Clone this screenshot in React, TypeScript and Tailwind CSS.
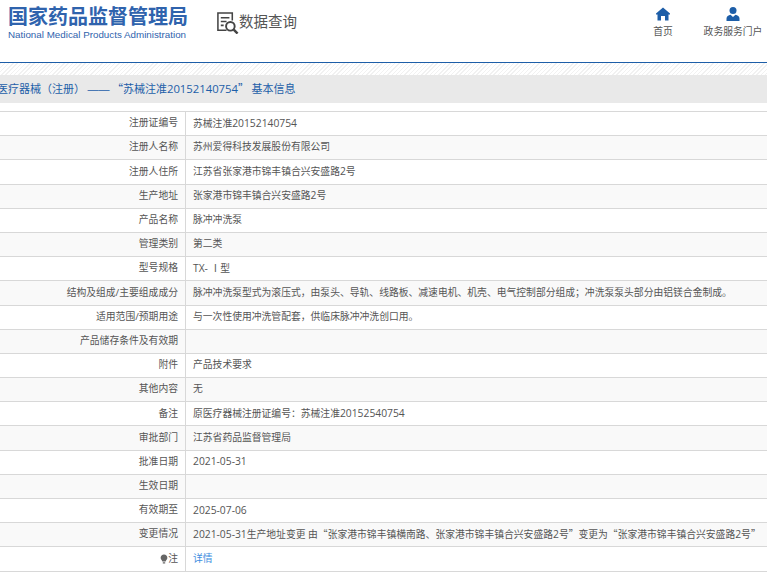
const rows = [
  ["注册证编号", "苏械注准20152140754"],
  ["注册人名称", "苏州爱得科技发展股份有限公司"],
  ["注册人住所", "江苏省张家港市锦丰镇合兴安盛路2号"],
  ["生产地址", "张家港市锦丰镇合兴安盛路2号"],
  ["产品名称", "脉冲冲洗泵"],
  ["管理类别", "第二类"],
  ["型号规格", "TX- Ⅰ型"],
  ["结构及组成/主要组成成分", "脉冲冲洗泵型式为滚压式，由泵头、导轨、线路板、减速电机、机壳、电气控制部分组成；冲洗泵泵头部分由铝镁合金制成。"],
  ["适用范围/预期用途", "与一次性使用冲洗管配套，供临床脉冲冲洗创口用。"],
  ["产品储存条件及有效期", ""],
  ["附件", "产品技术要求"],
  ["其他内容", "无"],
  ["备注", "原医疗器械注册证编号：苏械注准20152540754"],
  ["审批部门", "江苏省药品监督管理局"],
  ["批准日期", "2021-05-31"],
  ["生效日期", ""],
  ["有效期至", "2025-07-06"],
  ["变更情况", "2021-05-31生产地址变更 由“张家港市锦丰镇横南路、张家港市锦丰镇合兴安盛路2号”变更为“张家港市锦丰镇合兴安盛路2号”"],
]

// quotes come from the CJK font, latin runs are a touch bigger
function Txt({ text }: { text: string }) {
  const parts = text.split(/([“”]|[0-9A-Za-z-]+)/).filter(Boolean)
  return (
    <>
      {parts.map((p, i) => {
        if (p === "“" || p === "”") return <span key={i} className="font-['Noto_Sans_CJK_SC',sans-serif]">{p}</span>
        if (/^[0-9A-Za-z-]+$/.test(p)) return <span key={i} className="text-[10.3px]">{p}</span>
        return <span key={i}>{p}</span>
      })}
    </>
  )
}

function Row({ label, value, even }: { label: React.ReactNode; value: React.ReactNode; even: boolean }) {
  return (
    <div className={`flex h-[24.2px] border-b border-[#d8d8d8] ${even ? "bg-[#f9f9f9]" : "bg-white"}`}>
      <div className="flex w-[186px] shrink-0 items-center justify-end border-r border-[#d8d8d8] pr-[7px]">{label}</div>
      <div className="flex min-w-0 flex-1 items-center whitespace-pre pl-[7px]">
        <span>{value}</span>
      </div>
    </div>
  )
}

export default function App() {
  return (
    <div className="h-[580px] w-[767px] overflow-hidden bg-white font-['Open_Sans','Noto_Sans_CJK_SC',sans-serif] text-[9.8px] text-[#555] [text-spacing-trim:space-all]">
      {/* Header */}
      <div className="flex h-[63px] border-b border-[#1d5ea8]">
        <div className="ml-[8px] mt-[4px] w-[190px]">
          <div className="font-['Noto_Sans_CJK_SC',sans-serif] text-[20px] leading-[24px] font-bold whitespace-nowrap text-[#2f63ad]">国家药品监督管理局</div>
          <div className="mt-[1px] font-['Liberation_Sans',sans-serif] text-[9.8px] leading-[12px] whitespace-nowrap text-[#2f63ad]">National Medical Products Administration</div>
        </div>
        <div className="ml-[18px] mt-[10px] flex h-[25px] items-center">
          <svg viewBox="0 0 24 24" className="h-[23px] w-[23px] shrink-0" fill="none" stroke="#444" strokeWidth="1.6">
            <path d="M11 20H2V2h15v8" />
            <path d="M5 7h9M5 11h6M5 15h3" />
            <circle cx="15" cy="16" r="4.5" strokeWidth="2" />
            <path d="M18.5 19.5L22.5 23.5" strokeWidth="2.6" />
          </svg>
          <span className="text-[14.5px] leading-none">数据查询</span>
        </div>
        <div className="ml-auto flex">
          <div className="mr-[20px] mt-[6px] flex w-[40px] flex-col items-center">
            <svg viewBox="0 0 16 16" className="h-[16px] w-[16px]" fill="#1d5ea8">
              <path d="M8 1.5L15 7.5V8.5H13.5V14.5H10V10H6V14.5H2.5V8.5H1V7.5Z" />
            </svg>
            <span className="mt-[3px] leading-[14px]">首页</span>
          </div>
          <div className="mr-[4px] mt-[6px] flex w-[60px] flex-col items-center">
            <svg viewBox="0 0 16 16" className="h-[16px] w-[16px]" fill="#1d5ea8">
              <circle cx="8" cy="4.5" r="3.5" />
              <path d="M1.5 15V12.5C1.5 10.5 3.5 9 5.5 8.8L8 11L10.5 8.8C12.5 9 14.5 10.5 14.5 12.5V15Z" />
            </svg>
            <span className="mt-[3px] leading-[14px] whitespace-nowrap">政务服务门户</span>
          </div>
        </div>
      </div>

      {/* Hatched strip */}
      <div className="h-[12px] bg-[repeating-linear-gradient(135deg,#f1f1f1_0,#f1f1f1_1px,#ffffff_1px,#ffffff_3px)]" />

      {/* Title */}
      <div className="flex h-[28px] items-center overflow-hidden bg-[#e9e9e9] text-[11px] text-[#1d5ea8]">
        <span className="-ml-[3px] whitespace-pre font-['Noto_Sans_CJK_SC',sans-serif]">
          医疗器械（注册） <span className="font-['Liberation_Sans',sans-serif]">——</span> “苏械注准<span className="font-['Open_Sans',sans-serif] text-[11.3px]">20152140754</span>” 基本信息
        </span>
      </div>

      {/* Detail table */}
      <div className="mt-[8px] border-t border-[#d8d8d8]">
        {rows.map(([label, value], i) => (
          <Row key={label} label={label} value={<Txt text={value} />} even={i % 2 === 1} />
        ))}
        <Row
          even={false}
          label={
            <span className="flex items-center">
              <svg viewBox="0 0 10 12" className="h-[10px] w-[8px]" fill="#666">
                <path d="M5 0.5C2.5 0.5 0.8 2.3 0.8 4.5C0.8 6.3 2 7 3 9H7C8 7 9.2 6.3 9.2 4.5C9.2 2.3 7.5 0.5 5 0.5ZM3.5 10H6.5V11.5H3.5Z" />
              </svg>
              注
            </span>
          }
          value={<span className="text-[#3d8ee0]">详情</span>}
        />
      </div>
    </div>
  )
}
